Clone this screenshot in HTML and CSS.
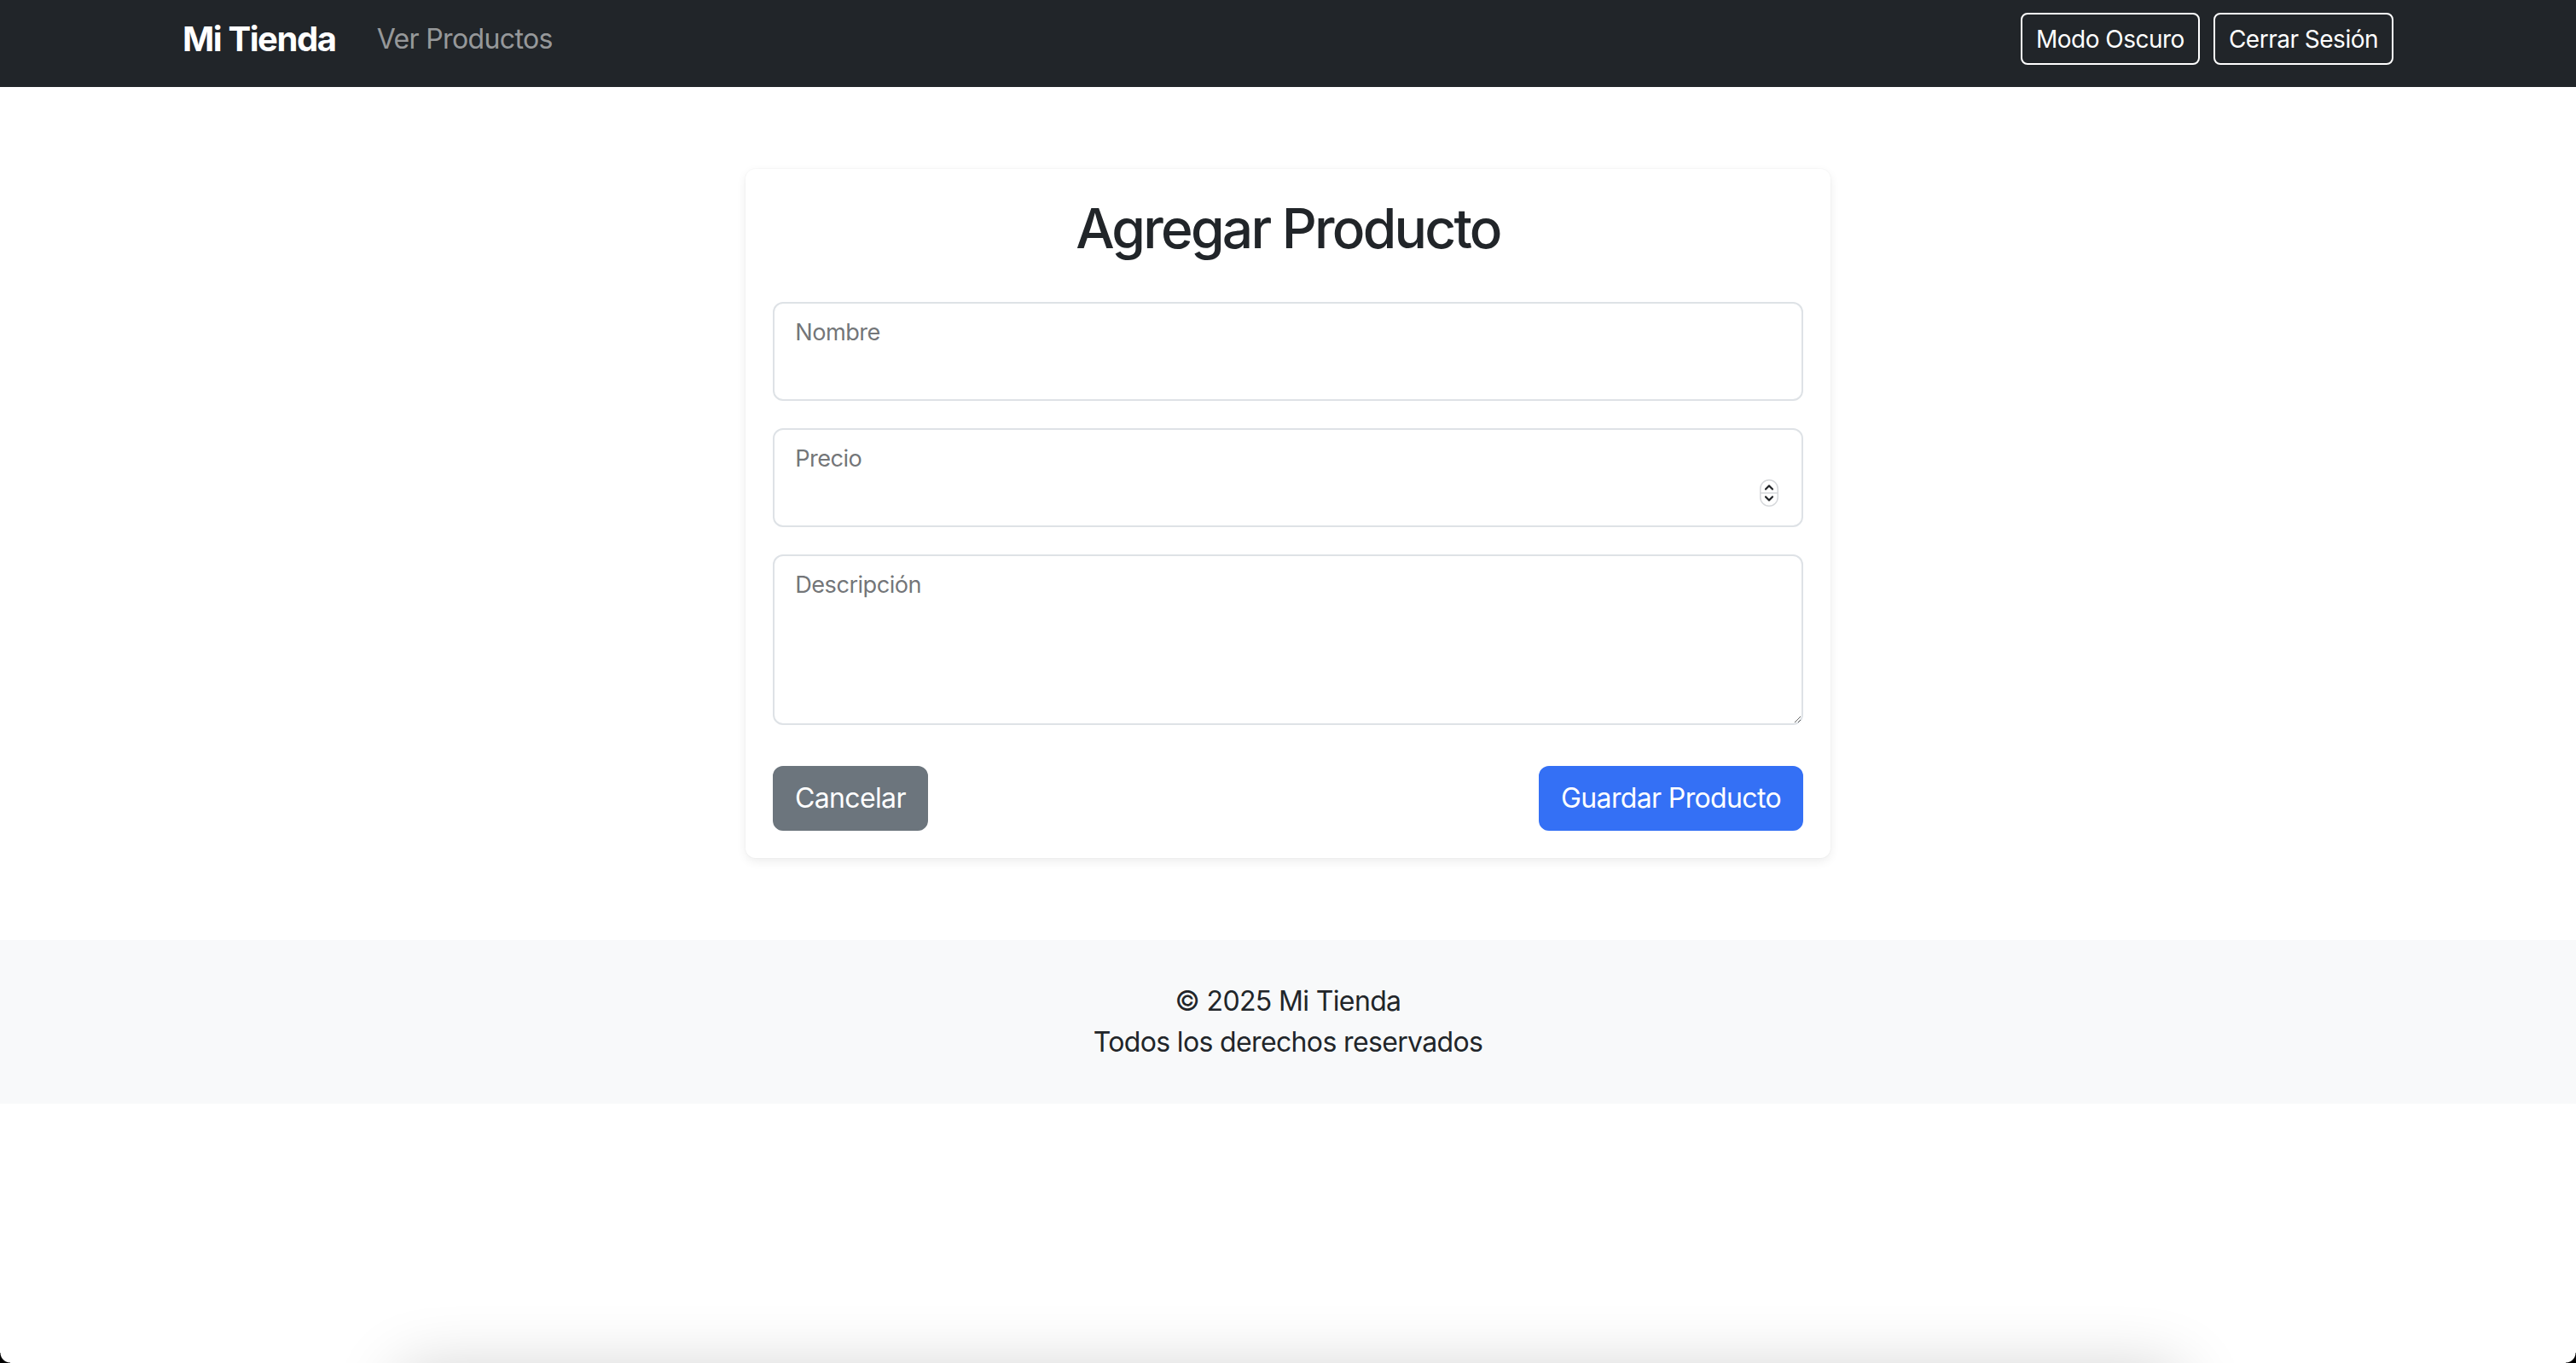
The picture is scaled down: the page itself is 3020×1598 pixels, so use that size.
FILE: index.html
```html
<!DOCTYPE html>
<html lang="es">
<head>
<meta charset="utf-8">
<title>Agregar Producto - Mi Tienda</title>
<link rel="stylesheet" href="styles.css">
</head>
<body>
<nav class="navbar">
  <div class="nav-inner">
    <a class="brand" href="#">Mi Tienda</a>
    <a class="nav-link" href="#">Ver Productos</a>
    <div class="nav-actions">
      <button class="btn-outline">Modo Oscuro</button>
      <button class="btn-outline">Cerrar Sesión</button>
    </div>
  </div>
</nav>

<main class="page">
  <section class="card">
    <h2 class="card-title">Agregar Producto</h2>
    <form class="form">
      <div class="field">
        <input class="control" type="text" id="nombre">
        <label class="float-label" for="nombre">Nombre</label>
      </div>
      <div class="field">
        <input class="control" type="text" id="precio">
        <label class="float-label" for="precio">Precio</label>
        <span class="spinner" aria-hidden="true">
          <svg width="22" height="32" viewBox="0 0 22 32">
            <rect x="0.75" y="0.75" width="20.5" height="30.5" rx="10.25" fill="#fff" stroke="#d6d8db" stroke-width="1.5"/>
            <line x1="1" y1="16" x2="21" y2="16" stroke="#d6d8db" stroke-width="1.5"/>
            <polyline points="7,11.5 11,7.5 15,11.5" fill="none" stroke="#1f2225" stroke-width="2.2" stroke-linecap="round" stroke-linejoin="round"/>
            <polyline points="7,20.5 11,24.5 15,20.5" fill="none" stroke="#1f2225" stroke-width="2.2" stroke-linecap="round" stroke-linejoin="round"/>
          </svg>
        </span>
      </div>
      <div class="field field-last">
        <textarea class="control control-area" id="descripcion"></textarea>
        <label class="float-label" for="descripcion">Descripción</label>
      </div>
      <div class="actions">
        <button type="button" class="btn btn-secondary">Cancelar</button>
        <button type="submit" class="btn btn-primary">Guardar Producto</button>
      </div>
    </form>
  </section>
</main>

<footer class="footer">
  <p>© 2025 Mi Tienda</p>
  <p>Todos los derechos reservados</p>
</footer>

<div class="dock-shadow" aria-hidden="true"></div>
<div class="corner corner-left" aria-hidden="true"></div>
<div class="corner corner-right" aria-hidden="true"></div>
</body>
</html>
```

FILE: styles.css
```css
* { box-sizing: border-box; }

html, body {
  margin: 0;
  padding: 0;
  background: #fff;
}

body {
  font-family: Inter, "Noto Sans", "Liberation Sans", sans-serif;
  font-size: 32px;
  line-height: 48px;
  color: #212529;
  letter-spacing: -0.02em;
}

/* ---------- navbar ---------- */
.navbar {
  background: #212529;
  height: 102px;
  padding-bottom: 11px;
}

.nav-inner {
  width: 2640px;
  height: 91px;
  margin: 0 auto;
  padding: 0 24px;
  display: flex;
  align-items: center;
}

.brand {
  font-size: 40px;
  font-weight: 700;
  color: #fff;
  text-decoration: none;
  margin-right: 32px;
  line-height: 60px;
  letter-spacing: -0.035em;
}

.nav-link {
  padding: 0 16px;
  color: rgba(255, 255, 255, 0.55);
  text-decoration: none;
  font-size: 32px;
}

.nav-actions {
  margin-left: auto;
  display: flex;
  gap: 16px;
}

.btn-outline {
  font-family: inherit;
  letter-spacing: -0.018em;
  font-size: 28px;
  line-height: 42px;
  height: 61px;
  padding: 0 16px;
  color: #fff;
  background: transparent;
  border: 2px solid #fff;
  border-radius: 8px;
}

/* ---------- card ---------- */
.page {
  width: 2640px;
  margin: 0 auto;
  padding: 96px 24px 0;
}

.card {
  width: 1272px;
  margin: 0 auto;
  padding: 32px;
  background: #fff;
  border-radius: 12px;
  box-shadow: 0 0 0 1px rgba(0, 0, 0, 0.02), 0 4px 12px rgba(0, 0, 0, 0.075);
}

.card-title {
  margin: 0 0 48px;
  font-size: 64px;
  font-weight: 500;
  line-height: 76px;
  text-align: center;
  letter-spacing: -0.043em;
}

.field {
  position: relative;
  margin-bottom: 32px;
}

.field-last {
  margin-bottom: 48px;
}

.control {
  display: block;
  width: 100%;
  height: 116px;
  padding: 52px 24px 20px;
  font-family: inherit;
  font-size: 32px;
  line-height: 48px;
  color: #212529;
  background: #fff;
  border: 2px solid #dee2e6;
  border-radius: 12px;
  outline: none;
}

.control-area {
  height: 200px;
  resize: vertical;
}

.float-label {
  position: absolute;
  top: 0;
  left: 0;
  padding: 32px 24px;
  border: 2px solid transparent;
  font-size: 32px;
  line-height: 48px;
  color: rgba(33, 37, 41, 0.65);
  white-space: nowrap;
  pointer-events: none;
  transform-origin: 0 0;
  transform: scale(0.85) translateY(-16px) translateX(4.8px);
}

.spinner {
  position: absolute;
  top: 60px;
  right: 29px;
  width: 22px;
  height: 32px;
  display: block;
}

.spinner svg { display: block; }

.actions {
  display: flex;
  justify-content: space-between;
}

.btn {
  font-family: inherit;
  letter-spacing: -0.02em;
  font-size: 32px;
  line-height: 48px;
  height: 76px;
  padding: 12px 24px;
  color: #fff;
  border: 2px solid transparent;
  border-radius: 12px;
}

.btn-secondary {
  background: #6c757d;
  border-color: #6c757d;
}

.btn-primary {
  background: #3470f5;
  border-color: #3470f5;
}

/* ---------- footer ---------- */
.footer {
  margin-top: 96px;
  background: #f8f9fa;
  padding: 48px 0;
  text-align: center;
}

.footer p {
  margin: 0;
}

/* ---------- window chrome ---------- */
.dock-shadow {
  position: fixed;
  left: 470px;
  width: 2085px;
  bottom: -210px;
  height: 200px;
  background: #fff;
  box-shadow: 0 0 80px rgba(0, 0, 0, 0.2);
}

.corner {
  position: fixed;
  bottom: 0;
  width: 12px;
  height: 12px;
}

.corner-left {
  left: 0;
  background: radial-gradient(circle at 100% 0, transparent 11px, #000 12px);
}

.corner-right {
  right: 0;
  background: radial-gradient(circle at 0 0, transparent 11px, #000 12px);
}
```
